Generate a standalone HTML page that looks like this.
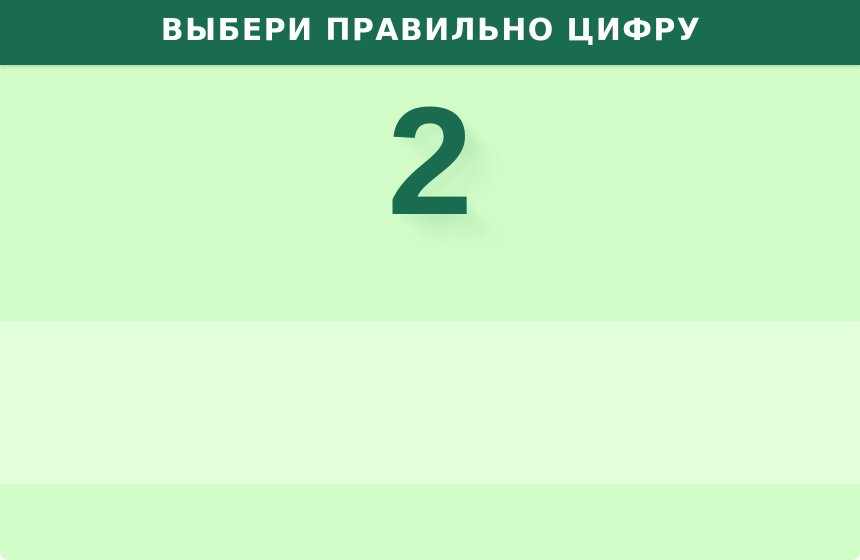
<!DOCTYPE html>
<html><head><meta charset="utf-8"><style>
html,body{margin:0;padding:0;width:860px;height:560px;overflow:hidden;background:#fff}
.wrap{position:absolute;left:0;top:0;width:860px;height:560px;background:#d2fdc8;border-radius:0 0 8px 8px;overflow:hidden}
.hdr{position:absolute;left:0;top:0;width:860px;height:65px;background:#196c4f;box-shadow:0 2px 3px rgba(0,0,0,.15)}
.hdr span{position:absolute;left:2px;right:0;top:13px;text-align:center;color:#fff;font:bold 30px "DejaVu Sans",sans-serif;letter-spacing:1.4px}
.band{position:absolute;left:0;top:321px;width:860px;height:163px;background:#e2ffdc}
.num{position:absolute;left:380px;top:84px;width:100px;text-align:center;color:#196c4f;font:bold 154px/1 "Liberation Sans",sans-serif;text-shadow:8px 8px 6px rgba(25,108,79,.05),18px 18px 10px rgba(25,108,79,.04),30px 30px 14px rgba(25,108,79,.03)}
</style></head><body>
<div class="wrap">
<div class="hdr"><span>ВЫБЕРИ ПРАВИЛЬНО ЦИФРУ</span></div>
<div class="num">2</div>
<div class="band"></div>
</div>
</body></html>
